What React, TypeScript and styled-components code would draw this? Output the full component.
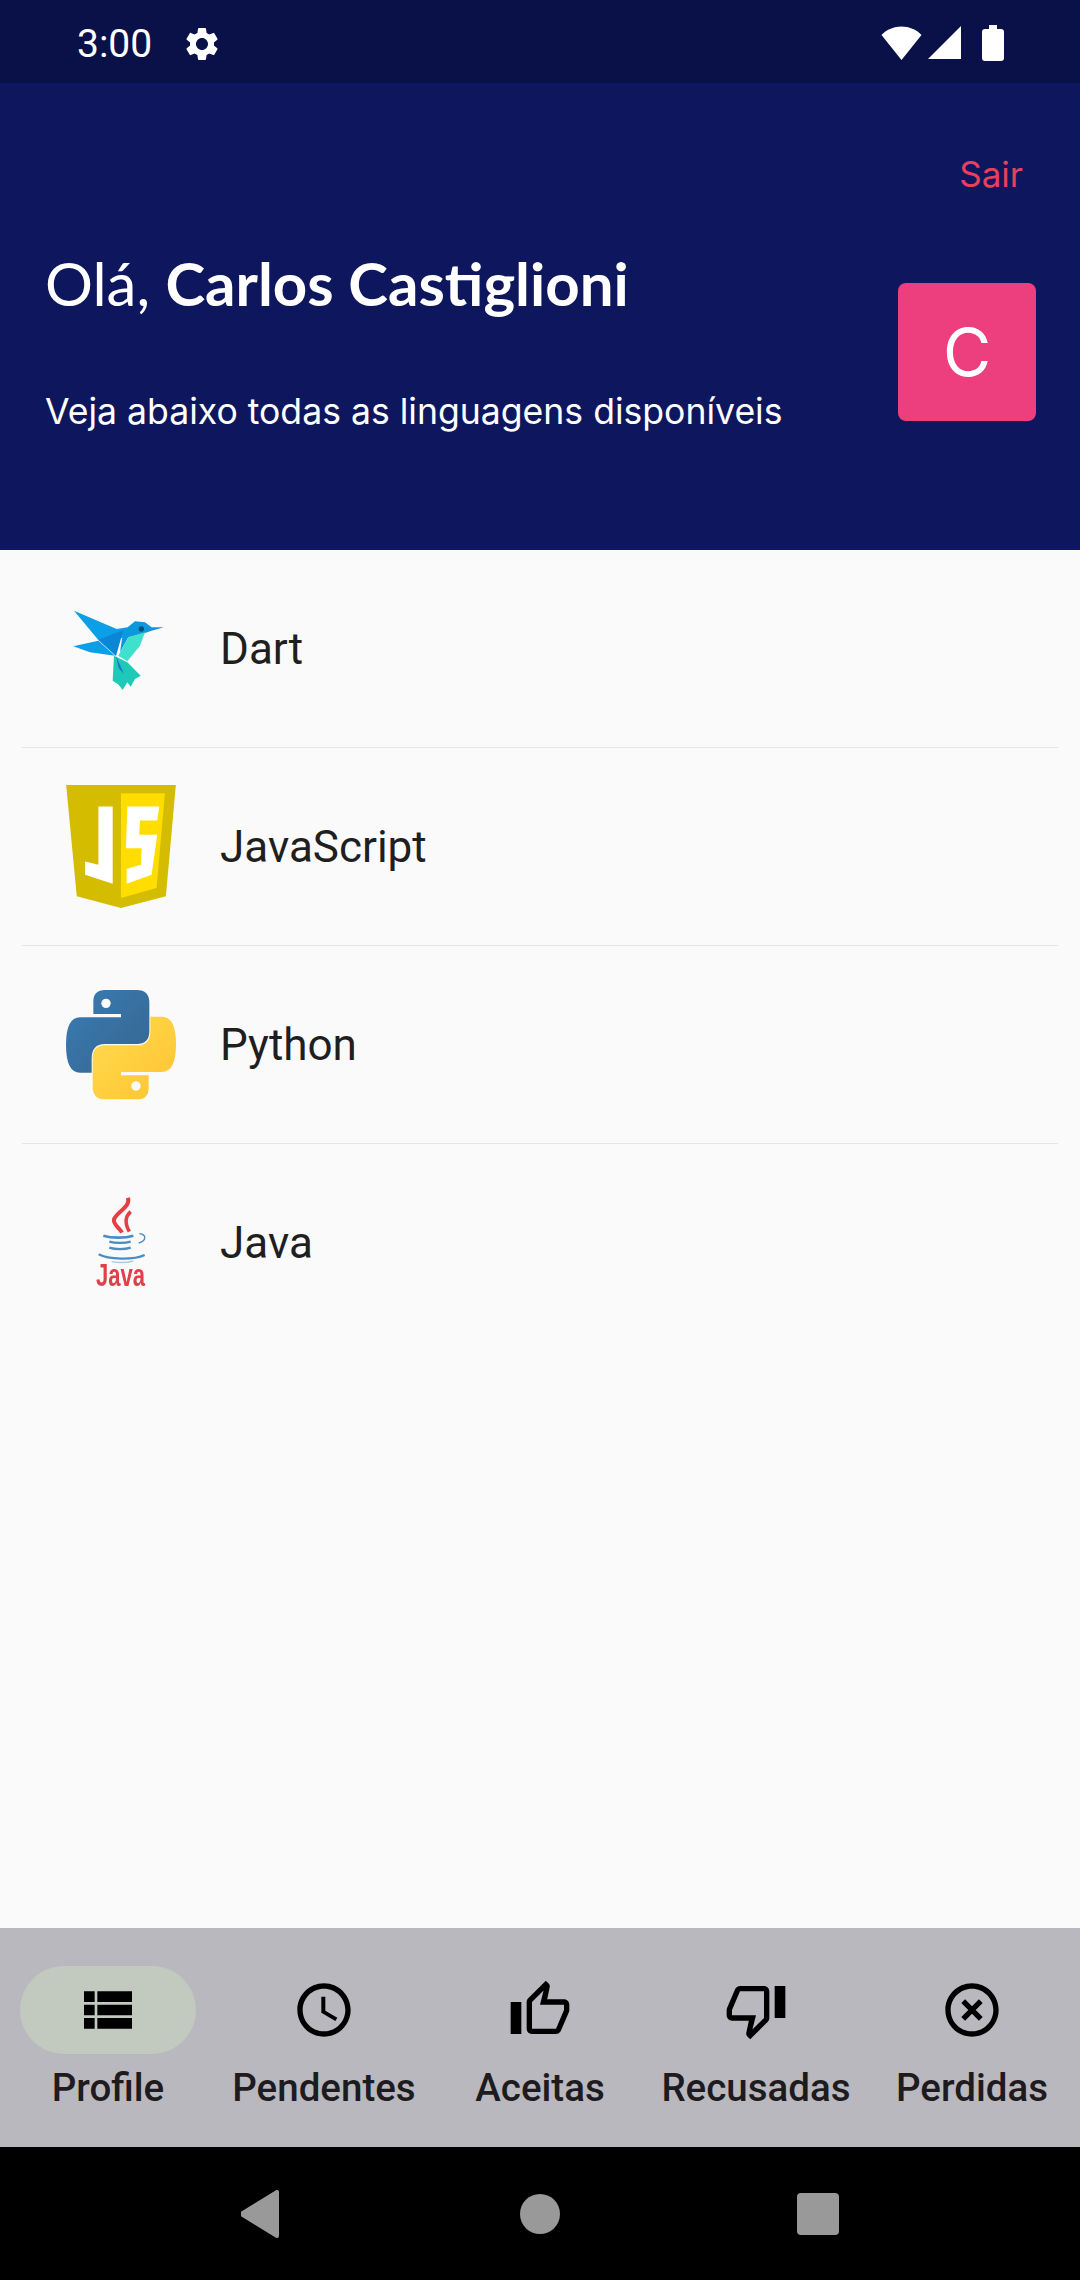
import styled, { createGlobalStyle } from 'styled-components'
import { IconType } from 'react-icons'
import {
  MdSettings,
  MdViewList,
  MdOutlineAccessTime,
  MdOutlineThumbUp,
  MdOutlineThumbDown,
  MdHighlightOff
} from 'react-icons/md'

const GlobalStyle = createGlobalStyle`
  *, *::before, *::after {
    box-sizing: border-box;
  }

  body {
    margin: 0;
    background: #fafafa;
    font-family: 'Roboto', sans-serif;
  }
`

function BirdLogo() {
  return (
    <LogoSvg viewBox="78 40 330 330">
      <polygon points="102,90 230,145 262,140 250,170 215,185 175,178" fill="#0a9fe6" />
      <polygon points="100,197 175,180 225,225 150,215" fill="#0a9fe6" />
      <polygon points="175,178 250,148 228,226" fill="#0a86d6" />
      <polygon points="250,150 285,122 315,125 335,140 372,140 335,150 315,157 265,170 240,215" fill="#0d97dc" />
      <circle cx="304" cy="145" r="8" fill="#0b4d78" />
      <polygon points="315,155 300,195 262,242 235,225 265,170" fill="#3fe0cc" />
      <polygon points="222,225 262,245 302,285 285,295 272,318 262,305 248,328 236,312 218,300" fill="#1fc9b8" />
      <polygon points="228,226 252,280 236,262" fill="#1478d2" />
    </LogoSvg>
  )
}

function JsLogo() {
  return (
    <LogoSvg viewBox="78 615 330 370" $tall>
      <polygon points="78,615 408,615 378,950 243,985 110,950" fill="#d4bc00" />
      <polygon points="243,640 375,640 350,925 243,955" fill="#ffdd00" />
      <polygon points="175,680 218,680 218,912 135,885 135,845 175,855" fill="#ffffff" />
      <polygon points="262,680 358,680 352,722 300,722 298,765 352,765 335,885 260,912 260,868 303,855 305,805 258,805" fill="#ffffff" />
    </LogoSvg>
  )
}

const SNAKE =
  'M195 90 H290 Q328 90 328 128 V214 Q328 252 290 252 H195 Q155 252 155 296 V338 H120 Q78 338 78 255 Q78 172 120 172 H243 V162 H160 V125 Q160 90 195 90 Z'

function PythonLogo() {
  return (
    <LogoSvg viewBox="78 90 330 330">
      <defs>
        <linearGradient id="snakeBlue" x1="0" y1="0" x2="1" y2="1">
          <stop offset="0" stopColor="#3a7cb2" />
          <stop offset="1" stopColor="#356591" />
        </linearGradient>
        <linearGradient id="snakeYellow" x1="0" y1="0" x2="1" y2="1">
          <stop offset="0" stopColor="#ffc331" />
          <stop offset="1" stopColor="#ffdc50" />
        </linearGradient>
      </defs>
      <path d={SNAKE} fill="url(#snakeBlue)" />
      <path d={SNAKE} fill="url(#snakeYellow)" transform="rotate(180 243 254)" />
      <circle cx="198" cy="130" r="14" fill="#fafafa" />
      <circle cx="288" cy="378" r="14" fill="#fafafa" />
    </LogoSvg>
  )
}

function JavaLogo() {
  return (
    <LogoSvg viewBox="78 681 330 330">
      <path d="M264 710 C272 740 232 750 222 775 C218 790 238 800 246 815" fill="none" stroke="#e53f45" strokeWidth="12" />
      <path d="M272 752 C252 770 256 790 268 812" fill="none" stroke="#e53f45" strokeWidth="11" />
      <path d="M190 824 C215 832 255 832 280 824" fill="none" stroke="#4a8cc4" strokeWidth="8" />
      <path d="M298 818 C322 820 318 840 296 846" fill="none" stroke="#4a8cc4" strokeWidth="4" />
      <path d="M208 842 C225 847 255 847 272 842" fill="none" stroke="#4a8cc4" strokeWidth="7" />
      <path d="M208 860 C225 866 255 866 272 860" fill="none" stroke="#4a8cc4" strokeWidth="7" />
      <path d="M176 880 C205 896 280 898 314 882" fill="none" stroke="#4a8cc4" strokeWidth="7" />
      <path d="M215 902 C240 906 260 906 280 900" fill="none" stroke="#a9cbe4" strokeWidth="4" />
      <text
        x="168"
        y="975"
        fontFamily="Liberation Sans, sans-serif"
        fontSize="96"
        fontWeight="700"
        fill="#e0404a"
        textLength="147"
        lengthAdjust="spacingAndGlyphs"
      >
        Java
      </text>
    </LogoSvg>
  )
}

type Language = {
  name: string
  logo: () => React.JSX.Element
}

const LANGUAGES: Language[] = [
  { name: 'Dart', logo: BirdLogo },
  { name: 'JavaScript', logo: JsLogo },
  { name: 'Python', logo: PythonLogo },
  { name: 'Java', logo: JavaLogo }
]

type Tab = {
  label: string
  icon: IconType
  active?: boolean
}

const TABS: Tab[] = [
  { label: 'Profile', icon: MdViewList, active: true },
  { label: 'Pendentes', icon: MdOutlineAccessTime },
  { label: 'Aceitas', icon: MdOutlineThumbUp },
  { label: 'Recusadas', icon: MdOutlineThumbDown },
  { label: 'Perdidas', icon: MdHighlightOff }
]

function App() {
  return (
    <>
      <GlobalStyle />
      <Page>
        <StatusBar>
          <StatusLeft>
            <Clock>3:00</Clock>
            <MdSettings size={40} color="#ffffff" />
          </StatusLeft>
          <StatusRight>
            <svg width="41" height="36" viewBox="0 0 41 36">
              <path d="M0.5 10 C11 -1.5 30 -1.5 40.5 10 L20.5 35 Z" fill="#ffffff" />
            </svg>
            <svg width="35" height="35" viewBox="0 0 35 35">
              <polygon points="34,1 34,34 1,34" fill="#ffffff" />
            </svg>
            <svg width="22" height="36" viewBox="0 0 22 36">
              <path d="M7 0 H15 V4 H19 Q22 4 22 7 V33 Q22 36 19 36 H3 Q0 36 0 33 V7 Q0 4 3 4 H7 Z" fill="#ffffff" />
            </svg>
          </StatusRight>
        </StatusBar>

        <Header>
          <SairRow>
            <Sair>Sair</Sair>
          </SairRow>
          <HeaderMain>
            <Greeting>
              <Title>
                Olá, <strong>Carlos Castiglioni</strong>
              </Title>
              <Subtitle>Veja abaixo todas as linguagens disponíveis</Subtitle>
            </Greeting>
            <Avatar>C</Avatar>
          </HeaderMain>
        </Header>

        <List>
          {LANGUAGES.map((language) => (
            <Row key={language.name}>
              <LogoBox>
                <language.logo />
              </LogoBox>
              <RowLabel>{language.name}</RowLabel>
            </Row>
          ))}
        </List>

        <NavBar>
          {TABS.map((tab) => (
            <NavItem key={tab.label}>
              <IconPill $active={tab.active}>
                <tab.icon size={64} color="#000000" />
              </IconPill>
              <NavLabel>{tab.label}</NavLabel>
            </NavItem>
          ))}
        </NavBar>

        <SystemBar>
          <svg width="42" height="48" viewBox="3 0 42 48">
            <path d="M39 2 V46 L3 24 Z" fill="#999999" stroke="#999999" strokeWidth="4" strokeLinejoin="round" />
          </svg>
          <HomeDot />
          <RecentSquare />
        </SystemBar>
      </Page>
    </>
  )
}

const Page = styled.main`
  width: 1080px;
  height: 2280px;
  display: flex;
  flex-direction: column;
  overflow: hidden;
  background: #fafafa;
`

const StatusBar = styled.div`
  height: 83px;
  flex: none;
  background: #0a1149;
  display: flex;
  align-items: center;
  justify-content: space-between;
  padding: 0 76px 0 77px;
`

const StatusLeft = styled.div`
  display: flex;
  align-items: center;
  gap: 30px;
  margin-top: 4px;
`

const Clock = styled.span`
  font-family: 'Roboto', sans-serif;
  font-size: 39px;
  color: #ffffff;
`

const StatusRight = styled.div`
  display: flex;
  align-items: center;
  gap: 5px;
  margin-top: 2px;

  svg:last-child {
    margin-left: 15px;
  }
`

const Header = styled.header`
  height: 467px;
  flex: none;
  background: #0e175e;
  padding: 69px 44px 0 45px;
  display: flex;
  flex-direction: column;
`

const SairRow = styled.div`
  display: flex;
  justify-content: flex-end;
  padding-right: 13px;
`

const Sair = styled.span`
  font-family: 'Inter', sans-serif;
  font-size: 35px;
  line-height: 44px;
  color: #e83f5b;
`

const HeaderMain = styled.div`
  display: flex;
  align-items: center;
  justify-content: space-between;
  margin-top: 74px;
`

const Greeting = styled.div`
  display: flex;
  flex-direction: column;
  gap: 75px;
  margin-top: -19px;
`

const Title = styled.h1`
  margin: 0;
  font-family: 'Lato', sans-serif;
  font-size: 60px;
  line-height: 64px;
  font-weight: 400;
  color: #ffffff;

  strong {
    font-weight: 700;
  }
`

const Subtitle = styled.p`
  margin: 0;
  font-family: 'Inter', sans-serif;
  font-size: 35.6px;
  line-height: 44px;
  color: #ffffff;
`

const Avatar = styled.div`
  width: 138px;
  height: 138px;
  flex: none;
  background: #ed3f7d;
  border-radius: 8px;
  display: flex;
  align-items: center;
  justify-content: center;
  font-family: 'Inter', sans-serif;
  font-size: 66px;
  color: #ffffff;
`

const List = styled.section`
  flex: 1;
  padding: 0 22px;
  display: flex;
  flex-direction: column;
`

const Row = styled.article`
  height: 198px;
  flex: none;
  display: flex;
  align-items: center;
  gap: 44px;
  padding-left: 44px;
  border-bottom: 1px solid #e6e6e6;

  &:last-child {
    border-bottom: none;
  }
`

const LogoBox = styled.div`
  width: 110px;
  flex: none;
  display: flex;
`

const LogoSvg = styled.svg<{ $tall?: boolean }>`
  width: 110px;
  height: ${(p) => (p.$tall ? '123px' : '110px')};
  filter: blur(0.6px);
`

const RowLabel = styled.span`
  font-family: 'Roboto', sans-serif;
  font-size: 44px;
  color: #1f1f1f;
`

const NavBar = styled.nav`
  height: 219px;
  flex: none;
  background: #b9b8be;
  display: grid;
  grid-template-columns: repeat(5, 1fr);
  padding-top: 38px;
`

const NavItem = styled.div`
  display: flex;
  flex-direction: column;
  align-items: center;
  gap: 12px;
`

const IconPill = styled.div<{ $active?: boolean }>`
  width: 176px;
  height: 88px;
  border-radius: 44px;
  display: flex;
  align-items: center;
  justify-content: center;
  background: ${(p) => (p.$active ? '#c2c9bf' : 'transparent')};
`

const NavLabel = styled.span`
  font-family: 'Roboto', sans-serif;
  font-size: 38.5px;
  line-height: 44px;
  font-weight: 500;
  color: #1d1b20;
  white-space: nowrap;
`

const SystemBar = styled.div`
  height: 133px;
  flex: none;
  background: #000000;
  display: flex;
  align-items: center;
  justify-content: center;
  gap: 237px;
`

const HomeDot = styled.div`
  width: 40px;
  height: 40px;
  border-radius: 50%;
  background: #999999;
`

const RecentSquare = styled.div`
  width: 42px;
  height: 42px;
  border-radius: 4px;
  background: #999999;
`

export default App
